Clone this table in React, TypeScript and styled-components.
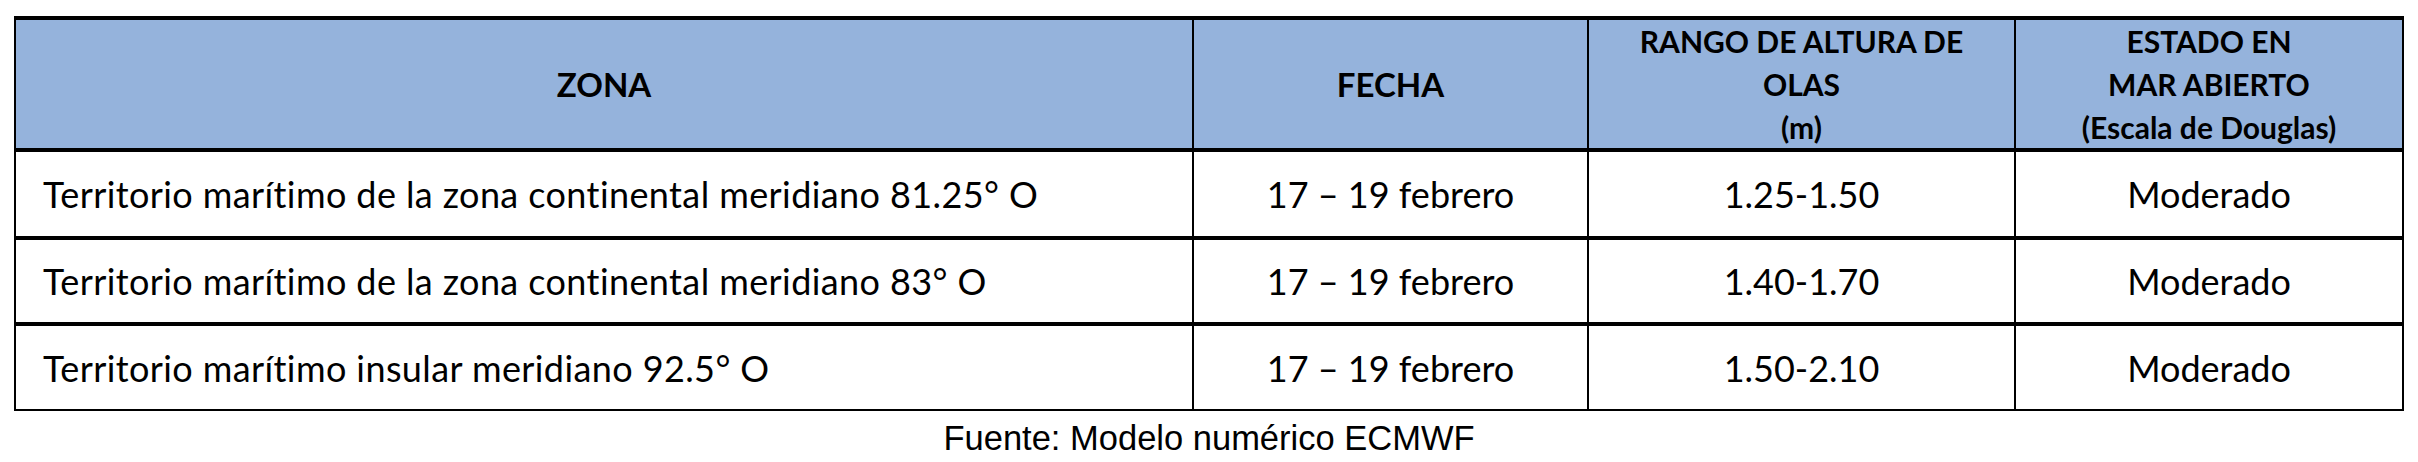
import React from "react";
import styled, { createGlobalStyle } from "styled-components";

const GlobalStyle = createGlobalStyle`
	html,
	body {
		margin: 0;
		padding: 0;
		background: #ffffff;
	}
	* {
		box-sizing: border-box;
	}
`;

const UIROOT = styled.div`
	display: flex;
	flex-direction: column;
	width: 2418px;
	padding: 16px 0 0 14px;
	font-family: Lato, "Open Sans", sans-serif;
	color: #000000;
`;

const Table = styled.div`
	display: flex;
	flex-direction: column;
	width: 2390px;
	border-top: 4px solid #000;
	border-left: 2px solid #000;
	border-right: 2px solid #000;
	border-bottom: 2px solid #000;
`;

const Row = styled.div<{ $head?: boolean; $height: number; $last?: boolean }>`
	display: grid;
	grid-template-columns: 1176px 395px 427px 388px;
	height: ${(p) => p.$height + (p.$last ? 0 : 4)}px;
	background-color: ${(p) => (p.$head ? "#95b3dc" : "#ffffff")};
	border-bottom: ${(p) => (p.$last ? "none" : "4px solid #000")};
`;

const Cell = styled.div<{ $left?: boolean; $first?: boolean }>`
	display: flex;
	align-items: center;
	justify-content: ${(p) => (p.$left ? "flex-start" : "center")};
	padding-left: ${(p) => (p.$left ? "27px" : "0")};
	border-left: ${(p) => (p.$first ? "none" : "2px solid #000")};
	font-size: 36px;
	font-weight: 400;
	letter-spacing: ${(p) => (p.$left ? "0.4px" : "0")};
	white-space: nowrap;
`;

const HeadText = styled.div<{ $size: number }>`
	font-size: ${(p) => p.$size}px;
	font-weight: 700;
	line-height: 43px;
	text-align: center;
	letter-spacing: 0;
	white-space: nowrap;
`;

const Source = styled.div`
	width: 2390px;
	margin-top: 7px;
	text-align: center;
	font-family: "Liberation Sans", Arial, sans-serif;
	font-size: 34.5px;
	line-height: 40px;
`;

const rows = [
	{
		zona: "Territorio marítimo de la zona continental meridiano 81.25° O",
		fecha: "17 – 19 febrero",
		rango: "1.25-1.50",
		estado: "Moderado",
		height: 84,
	},
	{
		zona: "Territorio marítimo de la zona continental meridiano 83° O",
		fecha: "17 – 19 febrero",
		rango: "1.40-1.70",
		estado: "Moderado",
		height: 82,
	},
	{
		zona: "Territorio marítimo insular meridiano 92.5° O",
		fecha: "17 – 19 febrero",
		rango: "1.50-2.10",
		estado: "Moderado",
		height: 83,
	},
];

const App = () => {
	return (
		<>
			<GlobalStyle />
			<UIROOT>
				<Table>
					<Row $head $height={128}>
						<Cell $first>
							<HeadText $size={33}>ZONA</HeadText>
						</Cell>
						<Cell>
							<HeadText $size={33}>FECHA</HeadText>
						</Cell>
						<Cell>
							<HeadText $size={30}>
								RANGO DE ALTURA DE
								<br />
								OLAS
								<br />
								(m)
							</HeadText>
						</Cell>
						<Cell>
							<HeadText $size={30}>
								ESTADO EN
								<br />
								MAR ABIERTO
								<br />
								(Escala de Douglas)
							</HeadText>
						</Cell>
					</Row>
					{rows.map((item, index) => {
						return (
							<Row
								key={"row_" + index}
								$height={item.height}
								$last={index === rows.length - 1}
							>
								<Cell $first $left>
									{item.zona}
								</Cell>
								<Cell>{item.fecha}</Cell>
								<Cell>{item.rango}</Cell>
								<Cell>{item.estado}</Cell>
							</Row>
						);
					})}
				</Table>
				<Source>Fuente: Modelo numérico ECMWF</Source>
			</UIROOT>
		</>
	);
};

export default App;
